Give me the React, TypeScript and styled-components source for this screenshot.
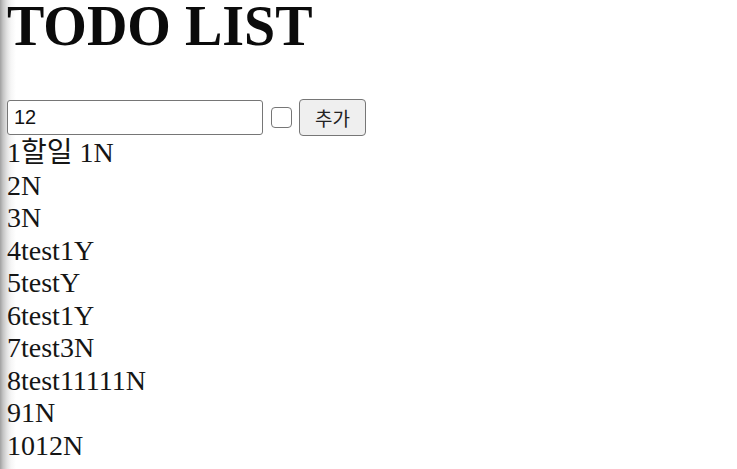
import styled, { createGlobalStyle } from "styled-components";

const todos = [
  { id: 1, text: "할일 1", done: false },
  { id: 2, text: "", done: false },
  { id: 3, text: "", done: false },
  { id: 4, text: "test1", done: true },
  { id: 5, text: "test", done: true },
  { id: 6, text: "test1", done: true },
  { id: 7, text: "test3", done: false },
  { id: 8, text: "test11111", done: false },
  { id: 9, text: "1", done: false },
  { id: 10, text: "12", done: false },
];

const App = () => {
  return (
    <SPage>
      <GlobalStyle />
      <STitle>TODO LIST</STitle>
      <SForm onSubmit={(e) => e.preventDefault()}>
        <SInput type="text" defaultValue="12" />
        <SCheck type="checkbox" />
        <SButton type="submit">추가</SButton>
      </SForm>
      <SList>
        {todos.map((todo) => (
          <SItem key={todo.id}>
            {todo.id}
            {todo.text}
            {todo.done ? "Y" : "N"}
          </SItem>
        ))}
      </SList>
    </SPage>
  );
};

export default App;

const GlobalStyle = createGlobalStyle`
  html, body {
    margin: 0;
    padding: 0;
    background: linear-gradient(90deg, #a0a0a0 0px, #c4c4c4 3px, #e2e2e2 7px, #f6f6f6 11px, #fff 16px);
    min-height: 100%;
  }
  body {
    font-family: "Liberation Serif", "Noto Sans CJK KR", serif;
    color: #111;
    overflow: hidden;
  }
`;

const SPage = styled.div`
  padding: 0 7px;
  height: 469px;
  box-sizing: border-box;
`;

const STitle = styled.h1`
  margin: 0;
  font-size: 56px;
  line-height: 52px;
  font-weight: bold;
  color: #0b0b0b;
`;

const SForm = styled.form`
  display: flex;
  align-items: center;
  margin-top: 47px;
  height: 37px;
`;

const SInput = styled.input`
  box-sizing: border-box;
  width: 256px;
  height: 35px;
  margin: 0;
  padding: 0 6px;
  border: 1px solid #767676;
  border-radius: 3px;
  font-family: "Liberation Sans", Arial, sans-serif;
  font-size: 20px;
  color: #111;
  background: #fff;
`;

const SCheck = styled.input`
  appearance: none;
  box-sizing: border-box;
  width: 21px;
  height: 21px;
  margin: 0 7px 0 8px;
  border: 1px solid #767676;
  border-radius: 4px;
  background: #fff;
`;

const SButton = styled.button`
  box-sizing: border-box;
  width: 67px;
  height: 37px;
  margin: 0;
  padding: 0;
  border: 1px solid #767676;
  border-radius: 4px;
  background: #efefef;
  font-family: "Noto Sans CJK KR", sans-serif;
  font-size: 19px;
  color: #222;
`;

const SList = styled.div`
  margin-top: 1px;
`;

const SItem = styled.div`
  font-size: 28px;
  line-height: 32.5px;
  color: #151515;
  white-space: nowrap;
`;
